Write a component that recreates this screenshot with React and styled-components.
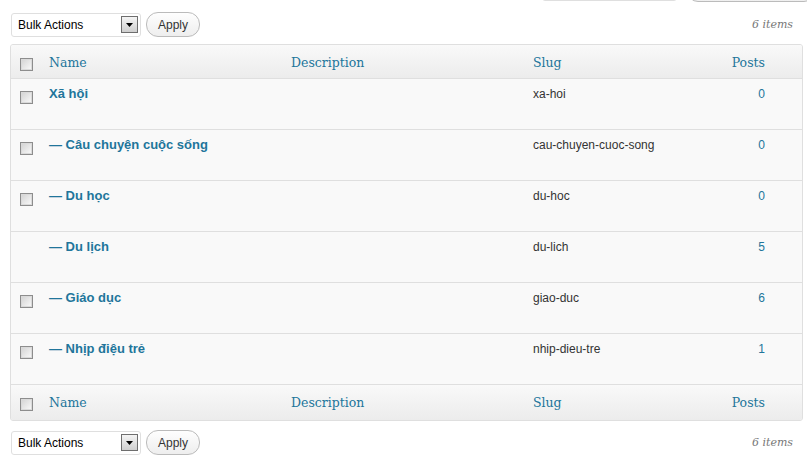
import styled, { createGlobalStyle } from "styled-components";

const GlobalStyle = createGlobalStyle`
  html, body {
    margin: 0;
    padding: 0;
    background: #fff;
    overflow: hidden;
  }
  body {
    font-family: "Liberation Sans", Arial, sans-serif;
    font-size: 12px;
    color: #333;
  }
`;

const categories = [
  { name: "Xã hội", slug: "xa-hoi", posts: 0, check: true },
  { name: "— Câu chuyện cuộc sống", slug: "cau-chuyen-cuoc-song", posts: 0, check: true },
  { name: "— Du học", slug: "du-hoc", posts: 0, check: true },
  { name: "— Du lịch", slug: "du-lich", posts: 5, check: false },
  { name: "— Giáo dục", slug: "giao-duc", posts: 6, check: true },
  { name: "— Nhịp điệu trẻ", slug: "nhip-dieu-tre", posts: 1, check: true },
];

const Checkbox = () => <Box />;

const Toolbar = ({ bottom }) => (
  <Nav $bottom={bottom}>
    <Select>
      <span>Bulk Actions</span>
      <Arrow>
        <svg width="7" height="4" viewBox="0 0 7 4">
          <path d="M0 0h7L3.5 4z" fill="#000" />
        </svg>
      </Arrow>
    </Select>
    <Button>Apply</Button>
    <Count>6 items</Count>
  </Nav>
);

const HeadCells = ({ footer }) => (
  <HeadRow $footer={footer}>
    <CheckCell $head>
      <Checkbox />
    </CheckCell>
    <HeadCell>Name</HeadCell>
    <HeadCell>Description</HeadCell>
    <HeadCell>Slug</HeadCell>
    <HeadCell $num>Posts</HeadCell>
  </HeadRow>
);

const App = () => {
  return (
    <Page>
      <GlobalStyle />
      <SearchBox>
        <SearchInput />
        <SearchButton />
      </SearchBox>

      <Toolbar />

      <Table>
        <HeadCells />
        {categories.map((cat) => (
          <Row key={cat.slug}>
            <CheckCell>{cat.check && <Checkbox />}</CheckCell>
            <NameCell>{cat.name}</NameCell>
            <Cell></Cell>
            <Cell>{cat.slug}</Cell>
            <PostsCell>{cat.posts}</PostsCell>
          </Row>
        ))}
        <HeadCells footer />
      </Table>

      <Toolbar bottom />
    </Page>
  );
};

const Page = styled.div`
  padding: 0 4px 0 10px;
  width: 793px;
`;

const SearchBox = styled.div`
  display: flex;
  justify-content: flex-end;
  align-items: flex-start;
  gap: 10px;
  margin-top: -24px;
  margin-right: -12px;
  height: 26px;
`;

const SearchInput = styled.div`
  width: 133px;
  height: 23px;
  border: 1px solid #dfdfdf;
  border-radius: 3px;
  background: #fff;
`;

const SearchButton = styled.div`
  width: 126px;
  height: 24px;
  border: 1px solid #bbb;
  border-radius: 11px;
  background: linear-gradient(#fff, #efefef);
`;

const Nav = styled.div`
  display: flex;
  align-items: center;
  height: 25px;
  margin-top: ${(p) => (p.$bottom ? "9px" : "10px")};
  padding-left: 1px;
`;

const Select = styled.div`
  box-sizing: border-box;
  width: 130px;
  height: 24px;
  border: 1px solid #dfdfdf;
  border-radius: 3px;
  background: #fff;
  display: flex;
  align-items: center;
  justify-content: space-between;
  padding: 0 2px 0 6px;
  font-size: 12px;
  color: #000;
`;

const Arrow = styled.span`
  box-sizing: border-box;
  width: 17px;
  height: 17px;
  border: 1px solid #6e6e6e;
  background: linear-gradient(#f4f4f4, #cfcfcf);
  display: flex;
  align-items: center;
  justify-content: center;
`;

const Button = styled.div`
  box-sizing: border-box;
  margin-left: 5px;
  width: 54px;
  height: 25px;
  border: 1px solid #bbb;
  border-radius: 12px;
  background: linear-gradient(#fefefe, #eeeeee);
  display: flex;
  align-items: center;
  justify-content: center;
  font-size: 12px;
  color: #333;
`;

const Count = styled.div`
  margin-left: auto;
  padding-right: 10px;
  font-family: "DejaVu Serif", Georgia, serif;
  font-style: italic;
  font-size: 11px;
  color: #777;
`;

const Table = styled.div`
  margin-top: 7px;
  border: 1px solid #dfdfdf;
  border-radius: 3px;
  background: #f9f9f9;
  overflow: hidden;
`;

const grid = `
  display: grid;
  grid-template-columns: 30px 242px 242px 1fr 90px;
`;

const HeadRow = styled.div`
  ${grid}
  height: ${(p) => (p.$footer ? "35px" : "33px")};
  background: linear-gradient(#f9f9f9, #ececec);
  border-top: ${(p) => (p.$footer ? "1px solid #dfdfdf" : "none")};
`;

const HeadCell = styled.div`
  padding: 9px 8px 0;
  font-family: "DejaVu Serif", Georgia, serif;
  font-size: 12.5px;
  line-height: 18px;
  color: #21759b;
  text-align: ${(p) => (p.$num ? "right" : "left")};
  padding-right: ${(p) => (p.$num ? "37px" : "8px")};
`;

const Row = styled.div`
  ${grid}
  height: 50px;
  border-top: 1px solid #dfdfdf;
`;

const CheckCell = styled.div`
  padding: ${(p) => (p.$head ? "13px" : "12px")} 0 0 9px;
`;

const Box = styled.span`
  display: block;
  box-sizing: border-box;
  width: 13px;
  height: 13px;
  border: 1px solid #8d8d8d;
  box-shadow: inset 0 0 0 1px #dadada;
  background: linear-gradient(135deg, #d2d2d2, #fbfbfb);
`;

const Cell = styled.div`
  padding: 6px 8px 0;
  line-height: 18px;
  font-size: 12px;
  color: #333;
`;

const NameCell = styled(Cell)`
  font-size: 13px;
  font-weight: bold;
  color: #21759b;
`;

const PostsCell = styled(Cell)`
  text-align: right;
  padding-right: 37px;
  color: #21759b;
`;

export default App;
